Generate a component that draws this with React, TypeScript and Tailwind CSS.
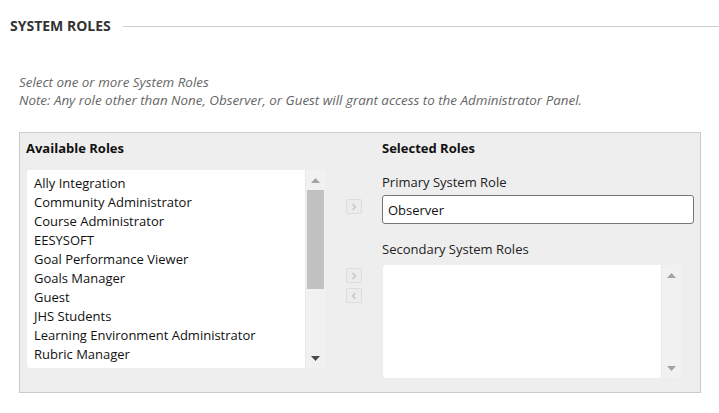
import React from "react";

const roles = [
  "Ally Integration",
  "Community Administrator",
  "Course Administrator",
  "EESYSOFT",
  "Goal Performance Viewer",
  "Goals Manager",
  "Guest",
  "JHS Students",
  "Learning Environment Administrator",
  "Rubric Manager",
];

function Arrow({ dir, color }: { dir: "up" | "down"; color: string }) {
  return (
    <svg width="9" height="5" viewBox="0 0 9 5">
      {dir === "up" ? (
        <path d="M0 5 L4.5 0 L9 5 Z" fill={color} />
      ) : (
        <path d="M0 0 L9 0 L4.5 5 Z" fill={color} />
      )}
    </svg>
  );
}

function MoveButton({ dir }: { dir: "right" | "left" }) {
  return (
    <button className="flex h-[15px] w-[16px] items-center justify-center rounded-[2px] border border-[#dcdcdc] bg-[#ececec]">
      <svg width="6" height="8" viewBox="0 0 6 8" fill="none" stroke="#c4c4c4" strokeWidth="1.4">
        {dir === "right" ? <path d="M1.5 1 L4.5 4 L1.5 7" /> : <path d="M4.5 1 L1.5 4 L4.5 7" />}
      </svg>
    </button>
  );
}

function ListBox({
  items,
  height,
  thumb,
  downColor,
}: {
  items: string[];
  height: string;
  thumb: boolean;
  downColor: string;
}) {
  return (
    <div className={`flex w-[298px] overflow-hidden rounded-[3px] bg-white ${height}`}>
      <ul className="flex-1 pl-[7px] pt-[4px] text-[13px] leading-[19px] text-[#111]">
        {items.map((r) => (
          <li key={r}>{r}</li>
        ))}
      </ul>
      <div className="flex w-[20px] flex-col items-center border-l border-[#e8e8e8] bg-[#f1f1f1]">
        <div className="flex h-[20px] items-center justify-center">
          <Arrow dir="up" color="#a3a3a3" />
        </div>
        <div className="flex-1 self-stretch px-px">
          {thumb && <div className="h-[99px] w-full bg-[#c1c1c1]" />}
        </div>
        <div className="flex h-[20px] items-center justify-center">
          <Arrow dir="down" color={downColor} />
        </div>
      </div>
    </div>
  );
}

export default function App() {
  return (
    <div className="min-h-screen bg-white pt-[16px] font-['Open_Sans',sans-serif] text-[#333]">
      <div className="flex items-center gap-[12px] pl-[10px]">
        <h2 className="text-[14px] font-bold uppercase leading-[20px] text-[#333]">System Roles</h2>
        <div className="mt-px h-px flex-1 bg-[#cfcfcf]" />
      </div>

      <div className="mt-[37px] pl-[19px] text-[13.4px] italic leading-[18px] text-[#666]">
        <p>Select one or more System Roles</p>
        <p>Note: Any role other than None, Observer, or Guest will grant access to the Administrator Panel.</p>
      </div>

      <div className="ml-[19px] mt-[23px] flex h-[261px] w-[682px] border border-[#cccccc] bg-[#eeeeee] pl-[6px]">
        <div className="flex flex-col">
          <h3 className="pt-[6px] text-[13px] font-bold leading-[18px] text-[#111]">Available Roles</h3>
          <div className="ml-px mt-[13px]">
            <ListBox items={roles} height="h-[198px]" thumb downColor="#4a4a4a" />
          </div>
        </div>

        <div className="flex w-[57px] flex-col pl-[21px]">
          <div className="mt-[66px]">
            <MoveButton dir="right" />
          </div>
          <div className="mt-[54px] flex flex-col gap-[5px]">
            <MoveButton dir="right" />
            <MoveButton dir="left" />
          </div>
        </div>

        <div className="flex flex-col">
          <h3 className="pt-[6px] text-[13px] font-bold leading-[18px] text-[#111]">Selected Roles</h3>
          <label className="mt-[16px] text-[13px] leading-[18px] text-[#222]">Primary System Role</label>
          <input
            readOnly
            value="Observer"
            className="mt-[4px] h-[29px] w-[312px] rounded-[3px] border border-[#767676] bg-white px-[5px] text-[13px] text-[#111] outline-none"
          />
          <label className="mt-[16px] text-[13px] leading-[18px] text-[#222]">Secondary System Roles</label>
          <div className="ml-px mt-[7px]">
            <ListBox items={[]} height="h-[113px]" thumb={false} downColor="#a3a3a3" />
          </div>
        </div>
      </div>
    </div>
  );
}
